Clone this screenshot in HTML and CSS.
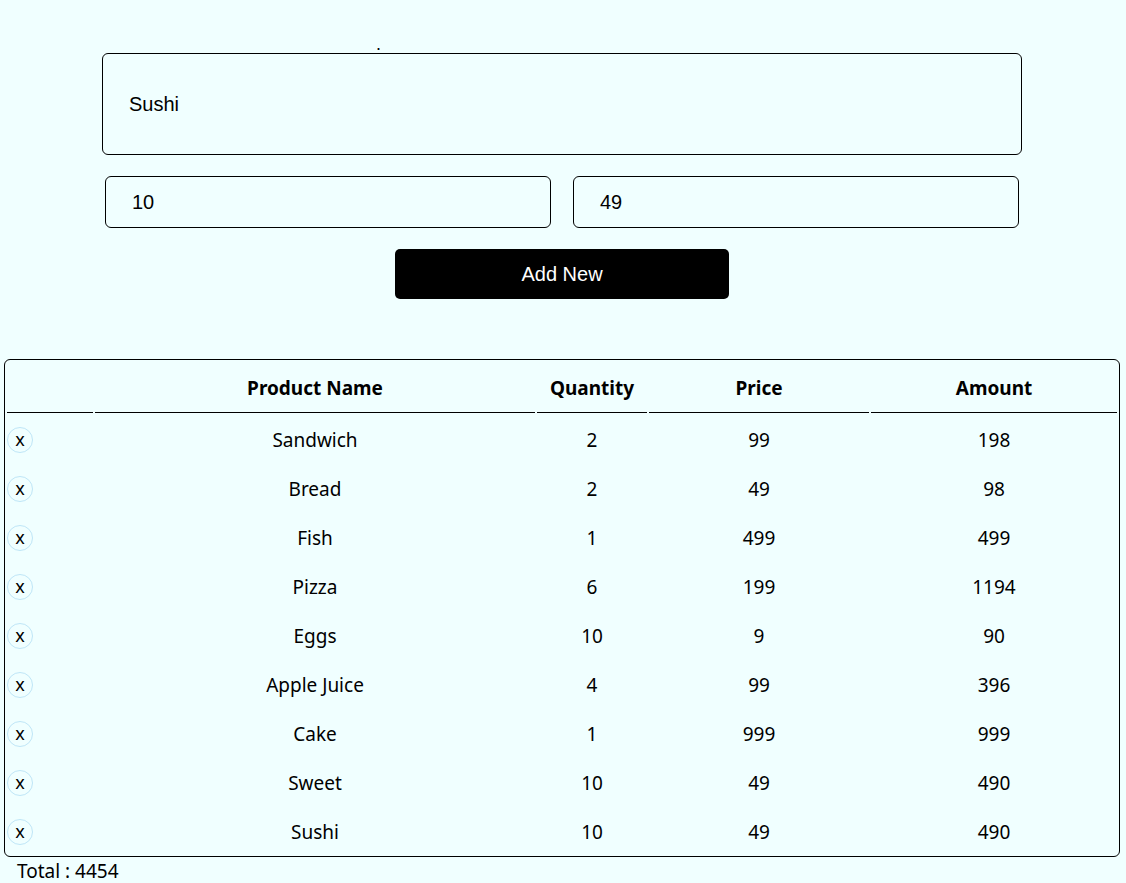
FILE: index.html
```html
<!DOCTYPE html>
<html>
<head>
<meta charset="utf-8">
<link rel="stylesheet" href="styles.css">
</head>
<body>
<div class="form">
  <div class="dot">.</div>
  <div class="name-box">Sushi</div>
  <div class="num-row">
    <div class="num-box">10</div>
    <div class="num-box">49</div>
  </div>
  <div class="btn-row"><button class="add-btn">Add New</button></div>
</div>
<table class="items">
  <thead>
    <tr><th class="c1"></th><th class="c2">Product Name</th><th class="c3">Quantity</th><th class="c4">Price</th><th class="c5">Amount</th></tr>
  </thead>
  <tbody>
    <tr><td class="del"><span class="x">x</span></td><td>Sandwich</td><td>2</td><td>99</td><td>198</td></tr>
    <tr><td class="del"><span class="x">x</span></td><td>Bread</td><td>2</td><td>49</td><td>98</td></tr>
    <tr><td class="del"><span class="x">x</span></td><td>Fish</td><td>1</td><td>499</td><td>499</td></tr>
    <tr><td class="del"><span class="x">x</span></td><td>Pizza</td><td>6</td><td>199</td><td>1194</td></tr>
    <tr><td class="del"><span class="x">x</span></td><td>Eggs</td><td>10</td><td>9</td><td>90</td></tr>
    <tr><td class="del"><span class="x">x</span></td><td>Apple Juice</td><td>4</td><td>99</td><td>396</td></tr>
    <tr><td class="del"><span class="x">x</span></td><td>Cake</td><td>1</td><td>999</td><td>999</td></tr>
    <tr><td class="del"><span class="x">x</span></td><td>Sweet</td><td>10</td><td>49</td><td>490</td></tr>
    <tr><td class="del"><span class="x">x</span></td><td>Sushi</td><td>10</td><td>49</td><td>490</td></tr>
  </tbody>
</table>
<div class="total">Total : 4454</div>
</body>
</html>
```
FILE: styles.css
```css
html, body {
  margin: 0;
  padding: 0;
  background: #f0ffff;
}
body {
  font-family: "Noto Sans", "Open Sans", sans-serif;
  color: #000;
}
.form {
  width: 920px;
  margin-left: 102px;
  padding-top: 35px;
  font-family: "Liberation Sans", Arial, sans-serif;
}
.dot {
  height: 18px;
  font-size: 18px;
  line-height: 18px;
  padding-left: 274px;
}
.name-box {
  box-sizing: border-box;
  height: 102px;
  border: 1px solid #000;
  border-radius: 6px;
  padding-left: 26px;
  display: flex;
  align-items: center;
  font-size: 20px;
}
.num-row {
  display: flex;
  gap: 22px;
  margin-top: 21px;
  margin-left: 3px;
}
.num-box {
  box-sizing: border-box;
  width: 446px;
  height: 52px;
  border: 1px solid #000;
  border-radius: 6px;
  padding-left: 26px;
  display: flex;
  align-items: center;
  font-size: 20px;
}
.btn-row {
  margin-top: 21px;
  padding-left: 293px;
}
.add-btn {
  display: block;
  width: 334px;
  height: 50px;
  background: #000;
  color: #fff;
  border: none;
  border-radius: 5px;
  font-family: "Liberation Sans", Arial, sans-serif;
  font-size: 20px;
  padding: 0;
}
.items {
  margin-top: 60px;
  margin-left: 4px;
  width: 1116px;
  border: 1px solid #000;
  border-radius: 6px;
  border-collapse: separate;
  border-spacing: 2px;
  font-size: 19px;
  table-layout: fixed;
}
.items th {
  height: 49px;
  font-weight: bold;
  border-bottom: 1px solid #000;
  text-align: center;
  padding: 1px 0 0 0;
}
.items th.c1 { width: 86px; }
.items th.c2 { width: 440px; }
.items th.c3 { width: 110px; }
.items th.c4 { width: 220px; }
.items th.c5 { width: auto; }
.items td {
  height: 45px;
  text-align: center;
  padding: 2px 0 0 0;
}
.items td.del {
  text-align: left;
}
.x {
  display: inline-flex;
  align-items: center;
  justify-content: center;
  box-sizing: border-box;
  width: 26px;
  height: 26px;
  border: 1px solid #bfe6f7;
  border-radius: 50%;
  font-size: 18px;
  line-height: 1;
  padding-bottom: 3px;
}
.total {
  padding-top: 3px;
  padding-left: 17px;
  font-size: 19px;
  line-height: 22px;
}
```
